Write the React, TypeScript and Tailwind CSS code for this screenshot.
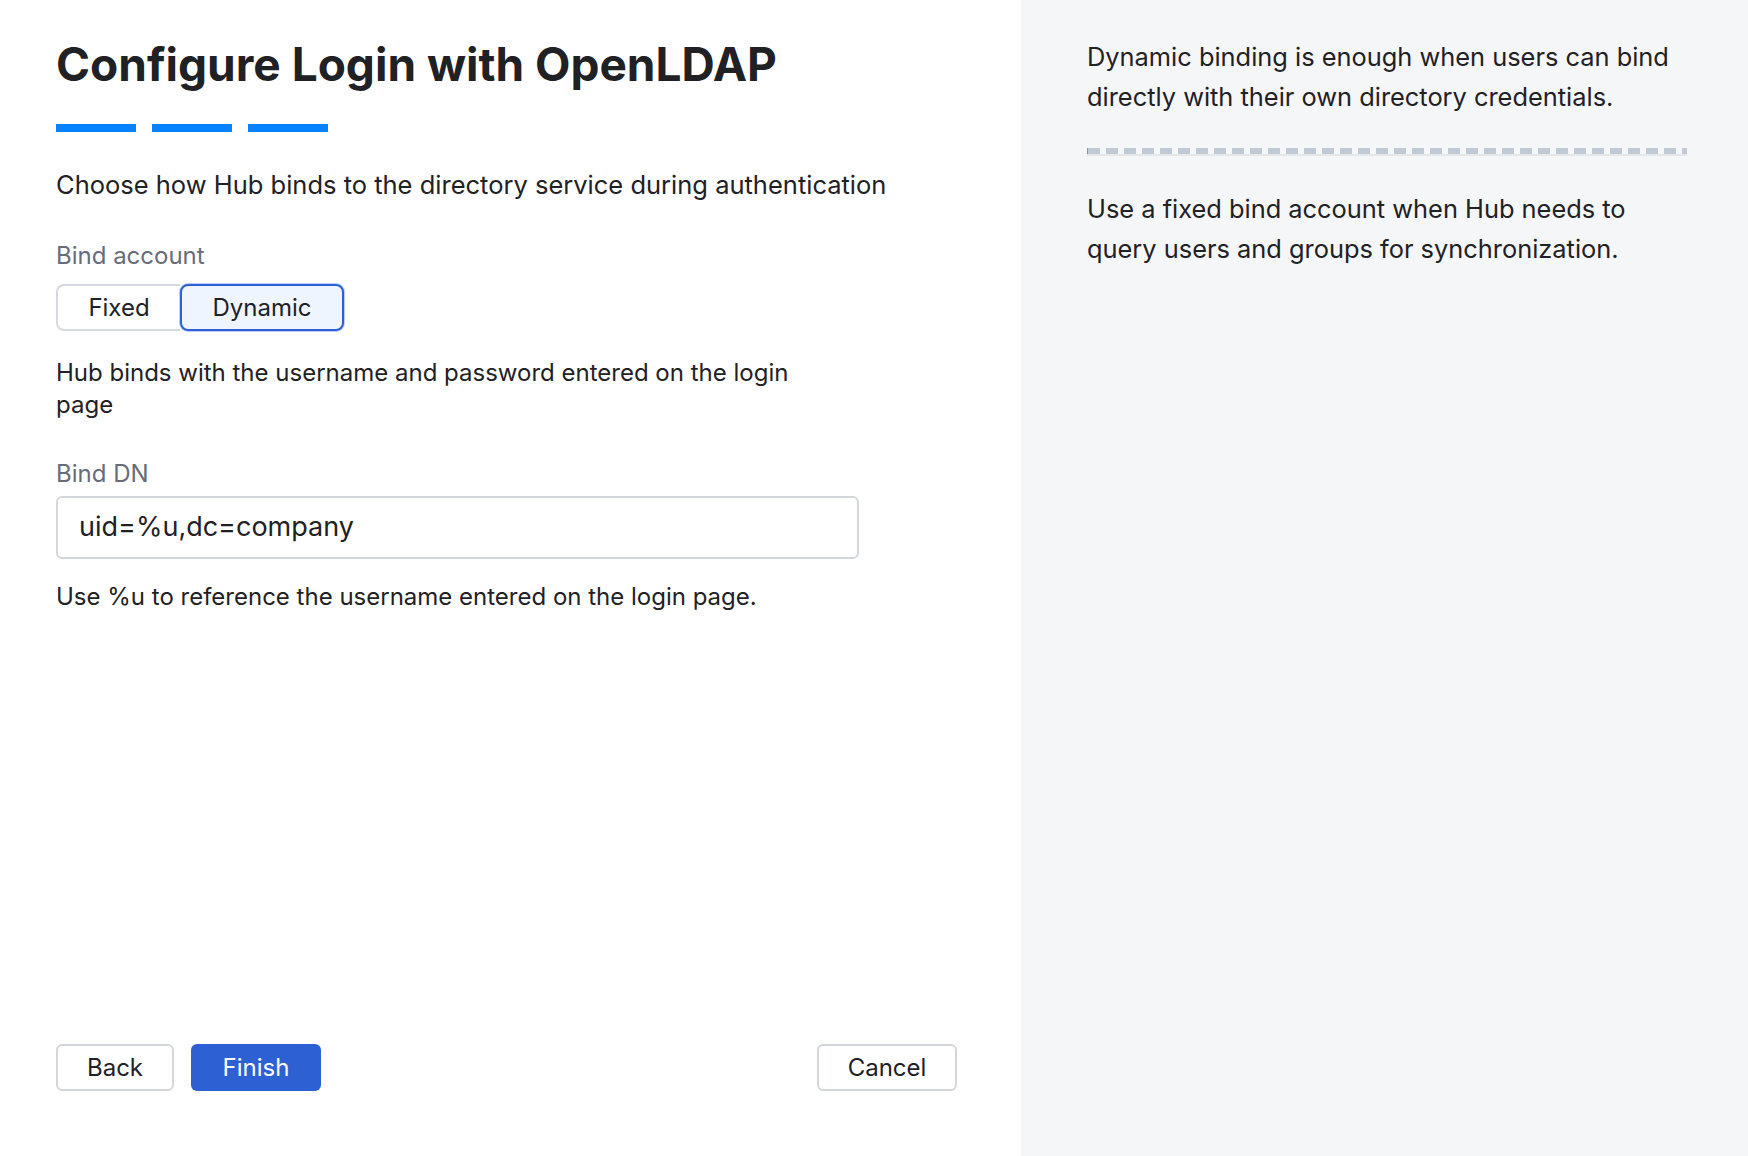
import React from "react";

const font = { fontFamily: "Inter, 'Noto Sans', sans-serif" };

function Segmented() {
  return (
    <div className="mt-[12px] flex h-[47px]">
      <button className="w-[124px] h-full rounded-l-lg border-2 border-r-0 border-[#d5d8de] bg-white text-[24px] text-[#1f2125]">
        Fixed
      </button>
      <button className="w-[164px] h-full rounded-lg border-2 border-[#2d60d4] bg-[#eff5ff] text-[24px] text-[#1f2125] shadow-[0_0_0_1px_#bcd0f7]">
        Dynamic
      </button>
    </div>
  );
}

export default function App() {
  return (
    <div
      className="grid grid-cols-[1021px_1fr] h-[1156px] w-[1748px] bg-white text-[#1f2125]"
      style={font}
    >
      <main className="flex flex-col pl-[56px] pr-[64px] pt-[38px] pb-[65px]">
        <h1 className="text-[46px] leading-[53px] font-bold text-[#1f2125]">
          Configure Login with OpenLDAP
        </h1>
        <div className="mt-[33px] flex gap-[16px]">
          <div className="h-[8px] w-[80px] bg-[#0582ff]" />
          <div className="h-[8px] w-[80px] bg-[#0582ff]" />
          <div className="h-[8px] w-[80px] bg-[#0582ff]" />
        </div>
        <p className="mt-[37px] text-[25.5px] leading-[32px]">
          Choose how Hub binds to the directory service during authentication
        </p>

        <label className="mt-[39px] text-[24px] leading-[32px] text-[#676c78]">
          Bind account
        </label>
        <Segmented />
        <p className="mt-[26px] max-w-[760px] text-[24px] leading-[32px]">
          Hub binds with the username and password entered on the login page
        </p>

        <label className="mt-[37px] text-[24px] leading-[32px] text-[#676c78]">
          Bind DN
        </label>
        <div className="mt-[6px] flex h-[63px] w-[803px] items-center rounded-md border-2 border-[#d3d6db] pl-[21px] text-[27px]">
          uid=%u,dc=company
        </div>
        <p className="mt-[22px] text-[24px] leading-[32px]">
          Use %u to reference the username entered on the login page.
        </p>

        <div className="mt-auto flex items-center">
          <button className="h-[47px] w-[118px] rounded-md border-2 border-[#d3d6db] bg-white text-[24px]">
            Back
          </button>
          <button className="ml-[17px] h-[47px] w-[130px] rounded-md bg-[#2d60d2] text-[24px] text-white">
            Finish
          </button>
          <button className="ml-auto h-[47px] w-[140px] rounded-md border-2 border-[#d3d6db] bg-white text-[24px]">
            Cancel
          </button>
        </div>
      </main>

      <aside className="bg-[#f5f6f8] pl-[66px] pt-[37px]">
        <div className="w-[600px]">
          <p className="text-[25.4px] leading-[40px]">
            Dynamic binding is enough when users can bind directly with their own directory credentials.
          </p>
          <div className="mt-[31px] border-b-2 border-[#e6e7ea]">
            <div className="h-[6px] border-l border-[#8a939e] bg-[repeating-linear-gradient(90deg,#bfcad6_0_12px,transparent_12px_18px)]" />
          </div>
          <p className="mt-[33px] text-[25.4px] leading-[40px]">
            Use a fixed bind account when Hub needs to query users and groups for synchronization.
          </p>
        </div>
      </aside>
    </div>
  );
}
